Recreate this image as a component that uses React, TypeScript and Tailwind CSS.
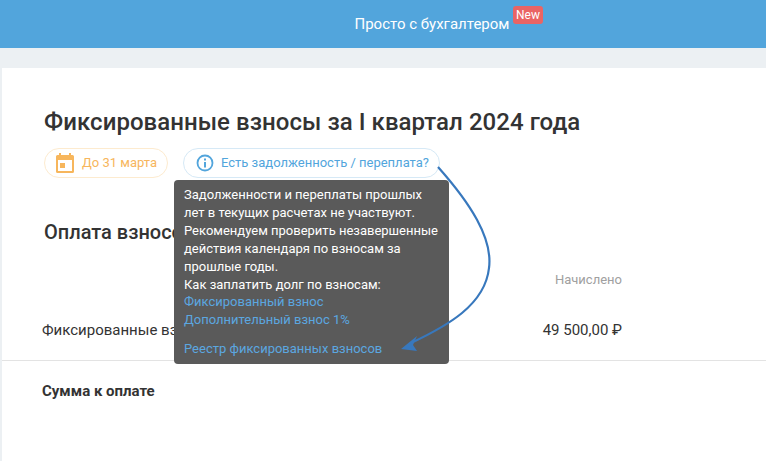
export default function App() {
  return (
    <div className="relative h-[461px] w-[766px] overflow-hidden bg-[#ecf0f3] font-['Roboto',sans-serif] text-[#333]">
      <header className="flex h-12 items-center bg-[#52a5dc] pl-[354.500px] text-[15px] text-white">
        <span>Просто с бухгалтером</span>
        <span className="mb-[18px] ml-[3.500px] flex h-[18px] w-[30px] items-center justify-center rounded-[3px] bg-[#ea6464] text-[12px]">New</span>
      </header>
      <main className="ml-[2px] mt-5 h-[393px] bg-white pt-[40px]">
        <h1 className="pl-[42px] text-[24px] font-medium leading-[28px] tracking-[0.05px] text-[#333]">Фиксированные взносы за I квартал 2024 года</h1>
        <div className="ml-[42px] mt-[12px] flex gap-[15px]">
          <div className="flex h-[30px] w-[124px] items-center rounded-full border border-[#fdebcf] pl-[11px] text-[13px] text-[#f7b65c]">
            <svg width="18" height="20" viewBox="0 0 18 20" className="mr-[8px]">
              <path fill="#f7b65c" fillRule="evenodd" d="M3 0h2v2h8V0h2v2h1.500A1.500 1.500 0 0 1 18 3.500v15a1.500 1.500 0 0 1-1.500 1.500h-15A1.500 1.500 0 0 1 0 18.500v-15A1.500 1.500 0 0 1 1.500 2H3zM2 7v11h14V7zm2 3h5v5H4z" />
            </svg>
            <span>До 31 марта</span>
          </div>
          <div className="flex h-[30px] w-[257px] items-center rounded-full border border-[#d6e9f6] pl-[12px] text-[13px] text-[#52a5dc]">
            <svg width="18" height="18" viewBox="0 0 18 18" className="mr-[7px]">
              <circle cx="9" cy="9" r="7.500" fill="none" stroke="#52a5dc" strokeWidth="1.800" />
              <rect x="8" y="8" width="2" height="5.500" fill="#52a5dc" />
              <rect x="8" y="4.500" width="2" height="2" fill="#52a5dc" />
            </svg>
            <span>Есть задолженность / переплата?</span>
          </div>
        </div>
        <h2 className="mt-[40px] pl-[42px] text-[20px] font-medium leading-[28px] text-[#333]">Оплата взносов</h2>
        <div className="mt-[25px] pr-[144px] text-right text-[13px] leading-[18px] text-[#a0a0a0]">Начислено</div>
        <div className="mt-[31px] flex justify-between pl-[40px] pr-[144px] text-[15px] leading-[20px] text-[#333]">
          <span>Фиксированные взносы</span>
          <span>49 500,00 ₽</span>
        </div>
        <div className="mt-[20px] border-t border-[#e3e3e3] pl-[40px] pt-[20px] text-[15px] font-bold leading-[20px] text-[#333]">Сумма к оплате</div>
      </main>
      <div className="absolute left-[174px] top-[180px] h-[184px] w-[275px] rounded-[4px] bg-[#5a5a5a] px-[10px] pt-[6px] text-[13px] leading-[17.900px] text-white">
        <p>Задолженности и переплаты прошлых лет в текущих расчетах не участвуют. Рекомендуем проверить незавершенные действия календаря по взносам за прошлые годы.</p>
        <p>Как заплатить долг по взносам:</p>
        <p className="text-[#5ba7e0]">Фиксированный взнос</p>
        <p className="text-[#5ba7e0]">Дополнительный взнос 1%</p>
        <p className="mt-[11px] text-[#5ba7e0]">Реестр фиксированных взносов</p>
      </div>
      <svg className="absolute left-0 top-0" width="766" height="461" viewBox="0 0 766 461" fill="none">
        <path d="M438 167C470 203 493 238 489 268C485 305 447 326 411 343" stroke="#3878bd" strokeWidth="2.200" />
        <path d="M401 349L417 336L413 345L417 351Z" fill="#3878bd" />
      </svg>
    </div>
  );
}
